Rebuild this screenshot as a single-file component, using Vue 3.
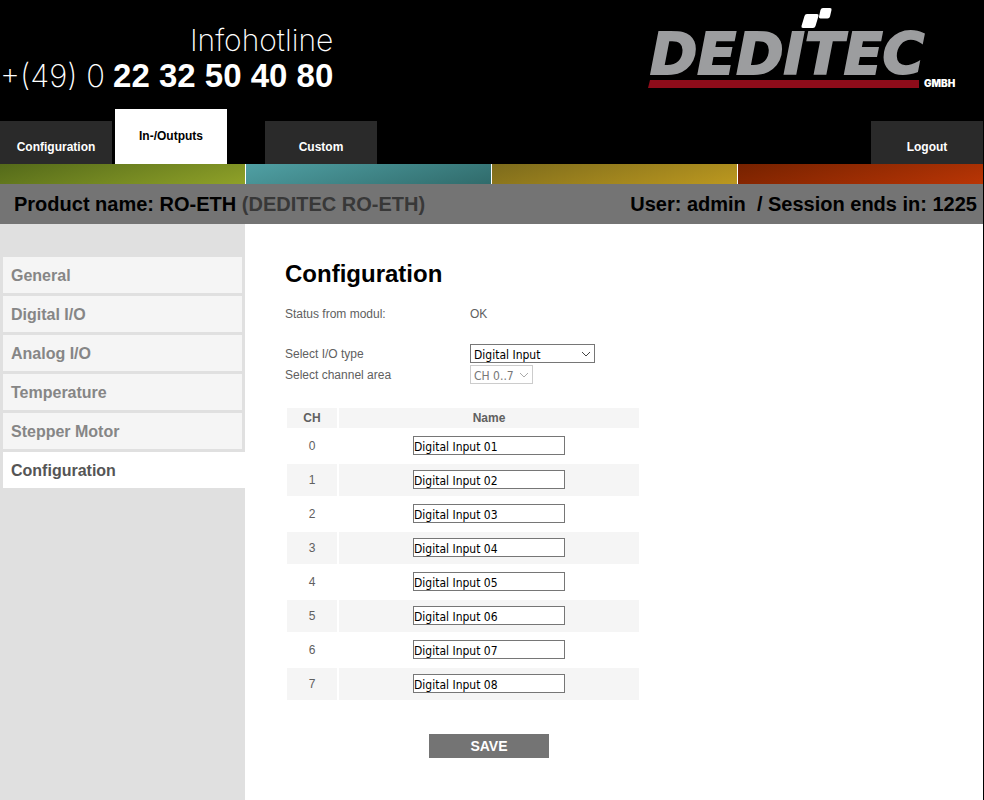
<template>
  <div class="page">
    <header class="header">
      <div class="brand">
        <div class="hotline">
          <div class="hotline-title">Infohotline</div>
          <div class="hotline-number"><span class="prefix">+(49) 0</span><strong>22 32 50 40 80</strong></div>
        </div>
        <svg class="logo" width="320" height="90" viewBox="0 0 320 90" role="img" aria-label="DEDITEC GMBH">
          <text class="logo-name" x="6" y="74">DEDITEC</text>
          <path d="M160 14h13q2 0 1.500 2l-3 10q-.6 2-2.500 2h-10q-2 0-1.500-2l3-10q.5-2 2.500-2z" fill="#fff" />
          <path d="M177 8h9q2 0 1.500 2l-1.500 6.500q-.5 2-2.500 2h-7q-2 0-1.500-2l1.500-6.500q.5-2 2.500-2z" fill="#fff" />
          <path d="M6 80H275V88H4z" fill="#8e0c1a" />
          <text class="logo-gmbh" x="280" y="87">GMBH</text>
        </svg>
      </div>

      <nav class="tabs">
        <a
          v-for="tab in tabs"
          :key="tab.name"
          href="#"
          class="tab"
          :class="[tab.cls, { active: tab.name === activeTab }]"
          @click.prevent="activeTab = tab.name"
        >{{ tab.name }}</a>
      </nav>
    </header>

    <div class="stripes">
      <div class="stripe green"></div>
      <div class="stripe teal"></div>
      <div class="stripe yellow"></div>
      <div class="stripe red"></div>
    </div>

    <div class="infobar">
      <div>Product name: RO-ETH <span class="dim">(DEDITEC RO-ETH)</span></div>
      <div class="session">User: admin&nbsp; / Session ends in: {{ session }}</div>
    </div>

    <div class="body">
      <aside class="sidebar">
        <a
          v-for="item in menu"
          :key="item"
          href="#"
          class="menu-item"
          :class="{ active: item === activeMenu }"
          @click.prevent="activeMenu = item"
        >{{ item }}</a>
      </aside>

      <main class="content">
        <h1>Configuration</h1>
        <div class="row status">
          <span class="label">Status from modul:</span>
          <span>OK</span>
        </div>
        <div class="row">
          <label class="label" for="io-type">Select I/O type</label>
          <div class="select type">
            <select id="io-type" v-model="ioType">
              <option>Digital Input</option>
              <option>Digital Output</option>
            </select>
            <svg width="10" height="6" viewBox="0 0 10 6"><path d="M1 1l4 4 4-4" fill="none" stroke="currentColor" /></svg>
          </div>
        </div>
        <div class="row">
          <label class="label" for="ch-area">Select channel area</label>
          <div class="select area">
            <select id="ch-area" disabled>
              <option>CH 0..7</option>
            </select>
            <svg width="10" height="6" viewBox="0 0 10 6"><path d="M1 1l4 4 4-4" fill="none" stroke="currentColor" /></svg>
          </div>
        </div>

        <form class="channels" @submit.prevent>
          <table>
            <thead>
              <tr><th class="ch">CH</th><th>Name</th></tr>
            </thead>
            <tbody>
              <tr v-for="(c, i) in channels" :key="i">
                <td>{{ i }}</td>
                <td><input v-model="c.name" type="text" :aria-label="'CH ' + i" /></td>
              </tr>
            </tbody>
          </table>
          <button type="submit" class="save">SAVE</button>
        </form>
      </main>
    </div>
  </div>
</template>

<script setup>
import { ref } from "vue";

const tabs = [
  { name: 'Configuration', cls: '' },
  { name: 'In-/Outputs', cls: '' },
  { name: 'Custom', cls: 'custom' },
  { name: 'Logout', cls: 'logout' }
]
const activeTab = ref('In-/Outputs')

const menu = ['General', 'Digital I/O', 'Analog I/O', 'Temperature', 'Stepper Motor', 'Configuration']
const activeMenu = ref('Configuration')

const session = ref(1225)
const ioType = ref('Digital Input')

const channels = ref(
  Array.from({ length: 8 }, (_, i) => ({ name: 'Digital Input 0' + (i + 1) }))
)
</script>

<style>
body {
  background: #fff;
}
</style>

<style scoped>
.page {
  display: flex;
  flex-direction: column;
  box-sizing: border-box;
  min-height: 100vh;
  border-right: 1px solid #000;
  font-family: "Liberation Sans", Arial, sans-serif;
  font-size: 12px;
  color: #606060;
}
a {
  text-decoration: none;
}

/* header */
.header {
  background: #000;
}
.brand {
  display: flex;
  justify-content: space-between;
  height: 109px;
  color: #fff;
}
.hotline {
  padding-top: 22px;
  text-align: right;
  white-space: nowrap;
}
.hotline-title,
.prefix {
  font-family: Inter, sans-serif;
  font-weight: 200;
}
.hotline-title {
  font-size: 30px;
  line-height: 36px;
}
.hotline-number {
  display: flex;
  align-items: baseline;
  gap: 8px;
  font-size: 33px;
  line-height: 36px;
}
.prefix {
  font-size: 31px;
}
.logo {
  margin-right: 19px;
}
.logo-name {
  font: italic bold 57px "DejaVu Sans", sans-serif;
  fill: #9c9d9f;
  stroke: #9c9d9f;
  stroke-width: 2px;
}
.logo-gmbh {
  font: 900 10px Inter, sans-serif;
  fill: #fff;
}

.tabs {
  display: flex;
  align-items: flex-end;
  gap: 3px;
  height: 55px;
}
.tab {
  width: 112px;
  height: 43px;
  line-height: 52px;
  background: #2a2a2a;
  color: #fff;
  font-weight: bold;
  text-align: center;
}
.tab.active {
  height: 55px;
  line-height: 54px;
  background: #fff;
  color: #000;
}
.tab.custom {
  margin-left: 35px;
}
.tab.logout {
  margin-left: auto;
}

.stripes {
  display: grid;
  grid-template-columns: repeat(4, 1fr);
  gap: 1px;
  height: 20px;
}
.green { background: linear-gradient(165deg, #546a1a, #8fa128); }
.teal { background: linear-gradient(165deg, #50a0a4, #306b6b); }
.yellow { background: linear-gradient(165deg, #7c6b1c, #bc981f); }
.red { background: linear-gradient(165deg, #762200, #b93505); }

.infobar {
  display: flex;
  justify-content: space-between;
  padding: 0 6px 0 14px;
  background: #747474;
  color: #000;
  font-size: 20px;
  font-weight: bold;
  line-height: 40px;
}
.dim {
  color: #383838;
}

/* body */
.body {
  display: flex;
  flex: 1;
}
.sidebar {
  display: flex;
  flex-direction: column;
  gap: 3px;
  box-sizing: border-box;
  width: 245px;
  padding: 33px 3px 0;
  background: #e0e0e0;
}
.menu-item {
  padding: 1px 0 0 8px;
  background: #f5f5f5;
  color: #868686;
  font-size: 16px;
  font-weight: bold;
  line-height: 35px;
}
.menu-item.active {
  margin-right: -3px;
  background: #fff;
  color: #555;
}

.content {
  flex: 1;
  padding: 36px 40px;
}
h1 {
  margin: 0 0 20px;
  color: #000;
  font-size: 24px;
  line-height: 28px;
}
.row {
  display: flex;
  align-items: center;
  height: 21px;
}
.row.status {
  height: 20px;
  margin: -4px 0 19px;
}
.label {
  width: 185px;
}
.select {
  display: grid;
  align-items: center;
  height: 19px;
  color: #444;
}
.select select,
.select svg {
  grid-area: 1 / 1;
}
.select svg {
  justify-self: end;
  margin-right: 4px;
  pointer-events: none;
}
.select select {
  width: 100%;
  height: 19px;
  padding: 2px 3px 0;
  border: 1px solid #767676;
  border-radius: 0;
  appearance: none;
  background: #fff;
  color: #000;
  font: 12px "DejaVu Sans Condensed", "DejaVu Sans", sans-serif;
}
.select.type {
  width: 125px;
}
.select.area {
  width: 63px;
  color: #aaa;
}
.select.area select {
  border-color: #ccc;
  color: #777;
  opacity: 1;
}

.channels {
  display: flex;
  flex-direction: column;
  align-items: flex-start;
  margin-top: 21px;
}
table {
  width: 356px;
  border-spacing: 2px;
  text-align: center;
}
th,
td {
  padding: 0;
}
th {
  height: 20px;
  background: #f5f5f5;
}
th.ch {
  width: 50px;
}
td {
  height: 31px;
  padding-bottom: 1px;
}
tbody tr:nth-child(even) td {
  background: #f5f5f5;
}
td input {
  display: block;
  box-sizing: border-box;
  width: 152px;
  height: 19px;
  margin: 0 auto;
  padding: 3px 0 0;
  border: 1px solid #767676;
  background: #fff;
  color: #000;
  font: 12px "DejaVu Sans Condensed", "DejaVu Sans", sans-serif;
}
.save {
  width: 120px;
  height: 24px;
  margin: 32px 0 0 144px;
  padding: 0;
  border: 0;
  background: #747474;
  color: #fff;
  font: bold 14px "Liberation Sans", Arial, sans-serif;
}
</style>
